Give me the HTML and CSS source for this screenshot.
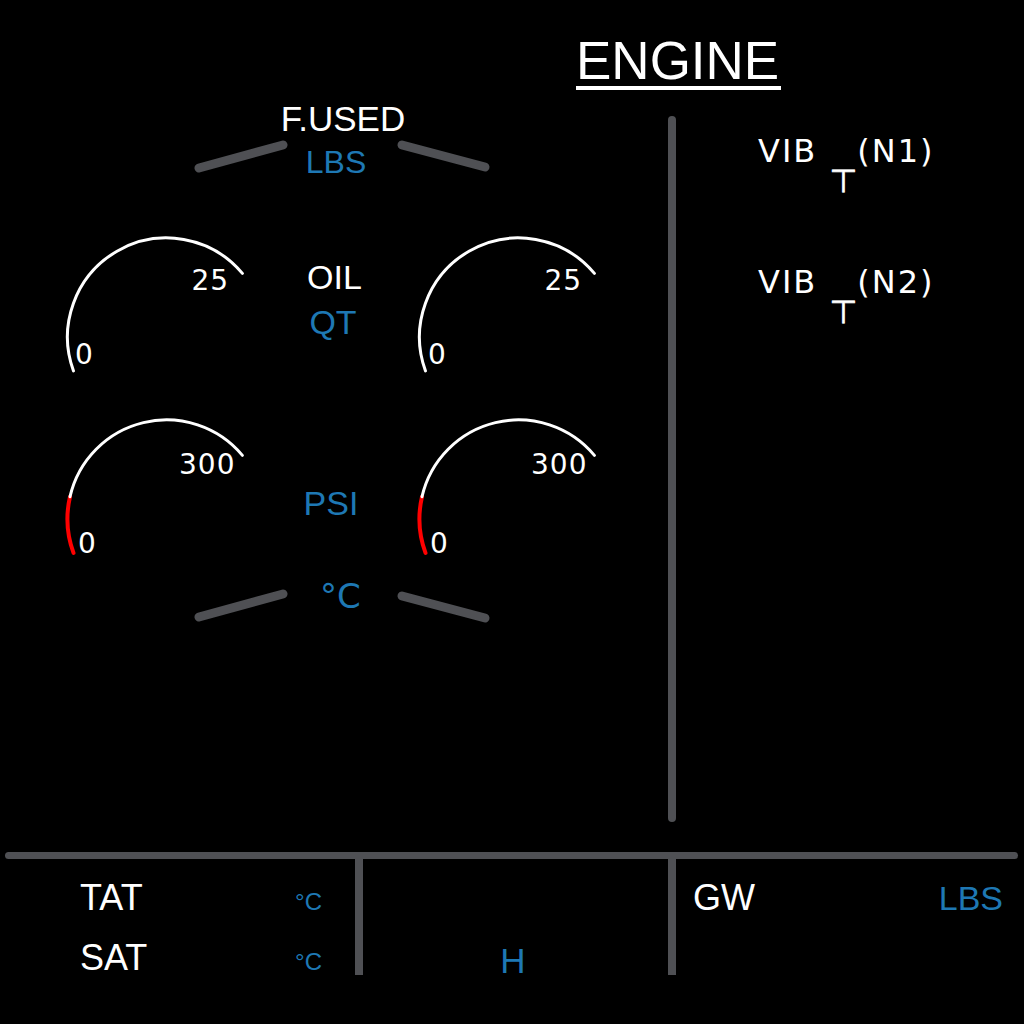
FILE: index.html
```html
<!DOCTYPE html>
<html>
<head>
<meta charset="utf-8">
<link rel="stylesheet" href="styles.css">
</head>
<body>
<div class="screen">
  <header class="header"><h1 class="title">ENGINE</h1></header>
  <div class="main">
    <section class="left">
      <div class="stack fused">
        <svg class="sep-lines" width="668" height="84" viewBox="0 0 668 84">
          <line x1="199" y1="72" x2="283" y2="49"/>
          <line x1="402" y1="49" x2="485" y2="71"/>
        </svg>
        <div class="fused-text">
          <div class="lbl white fused-lbl">F.USED</div>
          <div class="lbl blue lbs-top">LBS</div>
        </div>
      </div>

      <div class="gauge-row oil-row">
        <svg class="gauge" width="190" height="150" viewBox="0 0 190 150">
          <path class="arc" d="M13.5 140.9 A99 99 0 0 1 182.4 43.4"/>
          <text x="15" y="134">0</text>
          <text x="131.5" y="60">25</text>
        </svg>
        <div class="center-col">
          <div class="lbl white oil">OIL</div>
          <div class="lbl blue qt">QT</div>
        </div>
        <svg class="gauge" width="190" height="150" viewBox="0 0 190 150">
          <path class="arc" d="M13.5 140.9 A99 99 0 0 1 182.4 43.4"/>
          <text x="16" y="134">0</text>
          <text x="132.5" y="60">25</text>
        </svg>
      </div>

      <div class="gauge-row psi-row">
        <svg class="gauge" width="190" height="150" viewBox="0 0 190 150">
          <path class="arc red" d="M13.5 140.9 A99 99 0 0 1 10 84.7"/>
          <path class="arc" d="M10 84.7 A99 99 0 0 1 182.4 43.4"/>
          <text x="18" y="141">0</text>
          <text x="119" y="62">300</text>
        </svg>
        <div class="center-col">
          <div class="lbl blue psi">PSI</div>
        </div>
        <svg class="gauge" width="190" height="150" viewBox="0 0 190 150">
          <path class="arc red" d="M13.5 140.9 A99 99 0 0 1 10 84.7"/>
          <path class="arc" d="M10 84.7 A99 99 0 0 1 182.4 43.4"/>
          <text x="18" y="141">0</text>
          <text x="119" y="62">300</text>
        </svg>
      </div>

      <div class="stack temp">
        <svg class="sep-lines" width="668" height="78" viewBox="0 0 668 78">
          <line x1="199" y1="55" x2="283" y2="32"/>
          <line x1="402" y1="34" x2="485" y2="56"/>
        </svg>
        <div class="temp-text blue">°C</div>
      </div>
    </section>

    <div class="vline"></div>

    <section class="right">
      <div class="vib vib1">VIB <span class="tack">⊤</span>(N1)</div>
      <div class="vib vib2">VIB <span class="tack">⊤</span>(N2)</div>
    </section>
  </div>

  <footer class="bottom">
    <div class="hline"></div>
    <div class="cells">
      <div class="cell cell-air">
        <div class="row"><span class="blbl white">TAT</span><span class="unit blue">°C</span></div>
        <div class="row"><span class="blbl white">SAT</span><span class="unit blue">°C</span></div>
      </div>
      <div class="vdiv"></div>
      <div class="cell cell-time">
        <span class="lbl blue h">H</span>
      </div>
      <div class="vdiv"></div>
      <div class="cell cell-gw">
        <div class="row"><span class="blbl white">GW</span><span class="lbl blue">LBS</span></div>
      </div>
    </div>
  </footer>
</div>
</body>
</html>
```

FILE: styles.css
```css
html, body {
  margin: 0;
  padding: 0;
  background: #000;
}

.screen {
  width: 1024px;
  height: 1024px;
  background: #000;
  color: #fff;
  font-family: "Liberation Sans", Arial, sans-serif;
  overflow: hidden;
}

.white { color: #fff; }
.blue { color: #1e78b4; }

/* Header */
.header {
  height: 96px;
  box-sizing: border-box;
  padding: 36px 0 0 576px;
}

.title {
  margin: 0;
  display: inline-block;
  font-weight: normal;
  font-size: 53px;
  line-height: 50px;
  padding-right: 2px;
  border-bottom: 4px solid #fff;
}

/* Main area */
.main {
  display: flex;
  height: 756px;
}

.left {
  width: 668px;
  display: flex;
  flex-direction: column;
}

.vline {
  width: 8px;
  height: 706px;
  margin-top: 20px;
  border-radius: 4px;
  background: #4f5054;
}

.right {
  flex: 1;
  padding: 39px 0 0 82px;
  display: flex;
  flex-direction: column;
  gap: 99px;
}

.lbl {
  font-size: 34px;
  line-height: 34px;
}

/* stacked rows (lines + text in the same grid cell) */
.stack {
  display: grid;
}
.stack > * {
  grid-area: 1 / 1;
}

.sep-lines line {
  stroke: #4f5054;
  stroke-width: 9;
  stroke-linecap: round;
}

.fused {
  height: 84px;
}

.fused-text {
  width: 200px;
  margin-left: 243px;
  padding-top: 6px;
  text-align: center;
  display: flex;
  flex-direction: column;
  gap: 9px;
}

.fused-lbl {
  font-size: 35px;
}

.lbs-top {
  font-size: 32px;
  padding-right: 14px;
}

.temp {
  height: 78px;
}

.temp-text {
  margin-left: 320px;
  padding-top: 17px;
  font-family: "DejaVu Sans", sans-serif;
  font-size: 34px;
  line-height: 34px;
}

/* Gauges */
.gauge-row {
  display: flex;
  height: 150px;
  padding-left: 60px;
}
.oil-row { margin-top: 50px; }
.psi-row { margin-top: 32px; }

.gauge {
  display: block;
  flex: none;
}

.gauge .arc {
  fill: none;
  stroke: #fff;
  stroke-width: 3;
  stroke-linecap: round;
}
.gauge .arc.red {
  stroke: #ff0000;
  stroke-width: 4;
}
.gauge text {
  fill: #fff;
  font-family: "DejaVu Sans", sans-serif;
  font-size: 28px;
  letter-spacing: 1px;
}

.center-col {
  width: 162px;
  flex: none;
  display: flex;
  flex-direction: column;
  align-items: center;
  text-align: center;
}
.oil-row .center-col {
  padding-top: 30px;
  gap: 11px;
}
.oil { padding-left: 7px; }
.qt { padding-left: 4px; }
.psi-row .center-col {
  padding-top: 74px;
}

/* VIB */
.vib {
  height: 32px;
  font-family: "DejaVu Sans", sans-serif;
  font-size: 32px;
  line-height: 32px;
  letter-spacing: 2px;
  white-space: nowrap;
}
.tack {
  vertical-align: -30px;
  letter-spacing: 0;
  -webkit-text-stroke: 0.7px #fff;
}

/* Bottom */
.hline {
  margin-left: 5px;
  width: 1013px;
  height: 7px;
  border-radius: 4px;
  background: #4f5054;
}

.cells {
  display: flex;
  height: 116px;
}

.vdiv {
  width: 8px;
  background: #4f5054;
}

.cell {
  box-sizing: border-box;
}

.blbl {
  font-size: 36px;
  line-height: 36px;
}

.cell-air {
  width: 355px;
  padding: 21px 33px 0 80px;
  display: flex;
  flex-direction: column;
  gap: 24px;
}

.row {
  display: flex;
  justify-content: space-between;
  align-items: baseline;
  height: 36px;
}

.unit {
  font-size: 24px;
  line-height: 24px;
}

.cell-time {
  width: 305px;
  padding-top: 84px;
  padding-right: 5px;
  text-align: center;
}
.h {
  font-size: 35px;
  line-height: 35px;
}

.cell-gw {
  flex: 1;
  padding: 21px 21px 0 17px;
}
```
